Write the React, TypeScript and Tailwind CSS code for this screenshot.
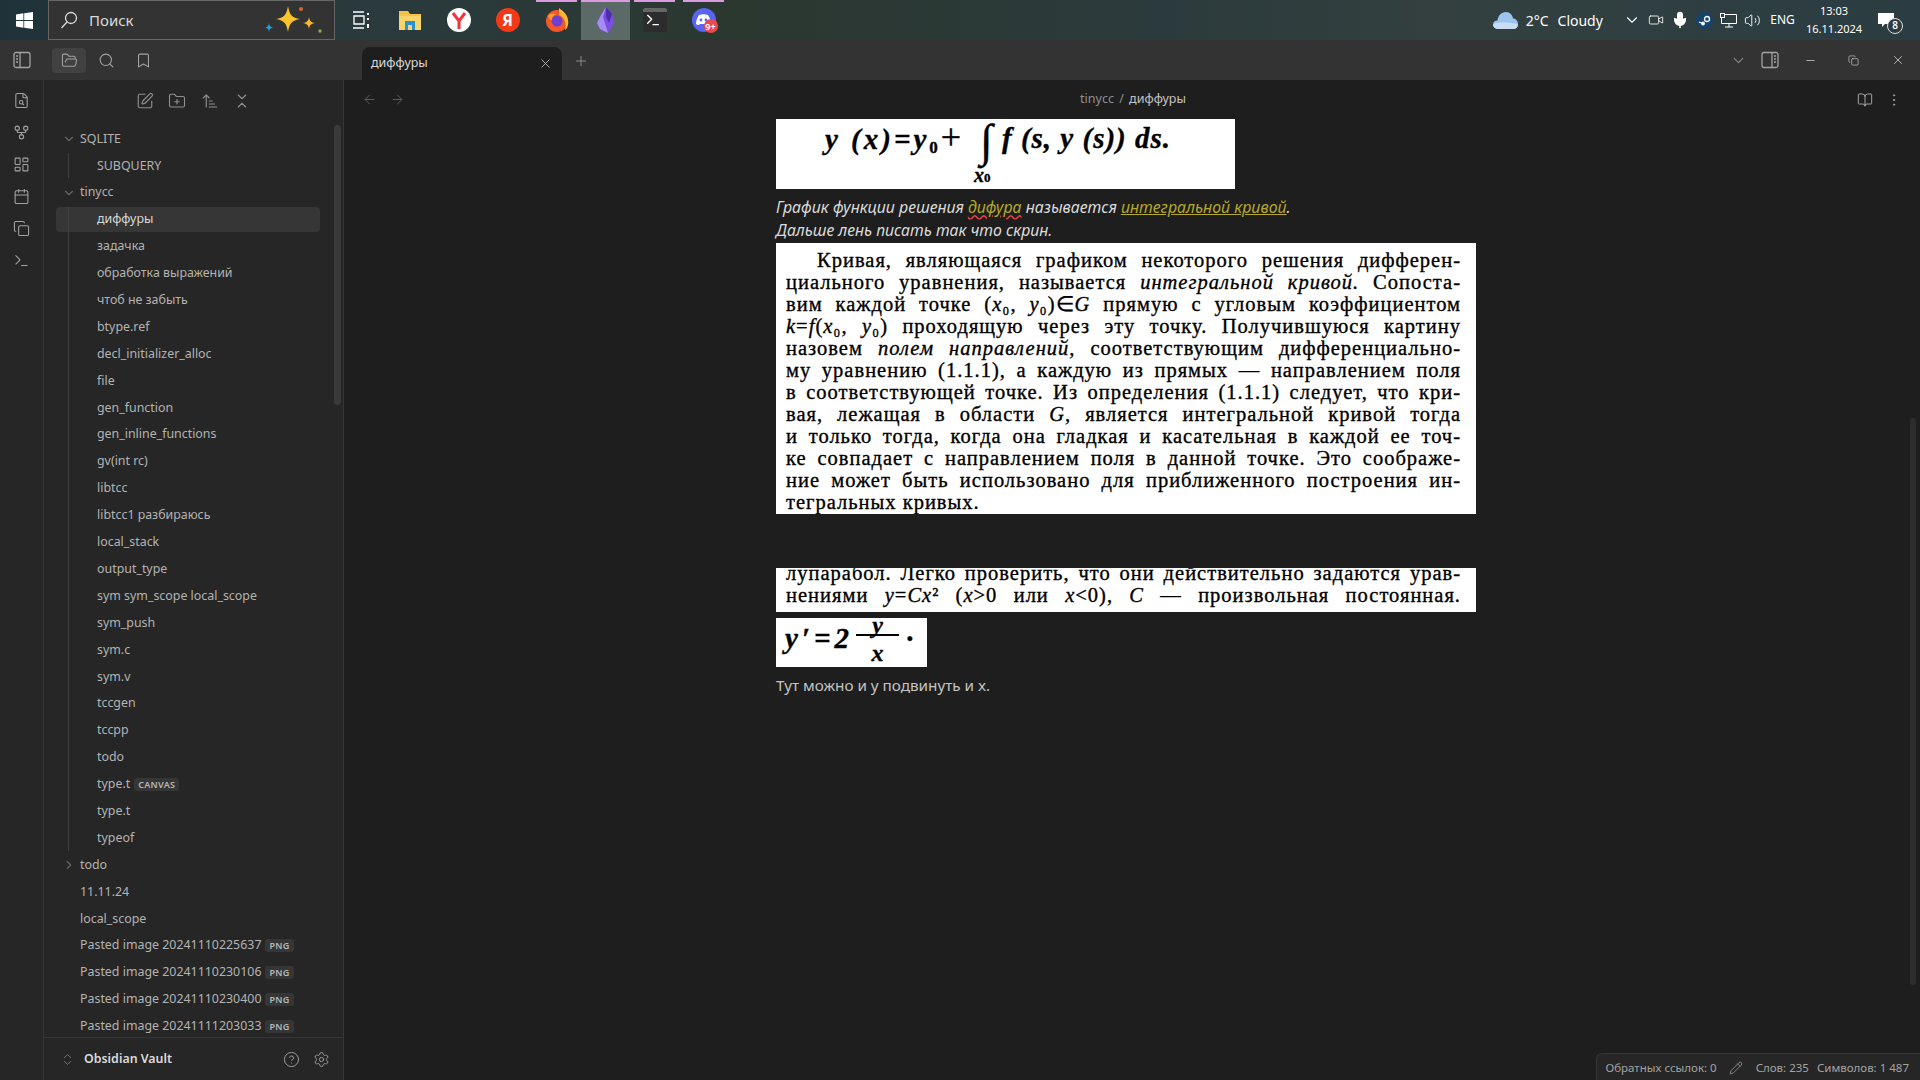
import React from 'react';
import {
  ArrowLeft,
  ArrowRight,
  ArrowUpNarrowWide,
  Bookmark,
  BookOpen,
  Calendar,
  ChevronDown,
  ChevronRight,
  ChevronsDownUp,
  ChevronsUpDown,
  CircleHelp,
  Copy,
  FileSearch,
  FolderOpen,
  FolderPlus,
  GitFork,
  LayoutDashboard,
  Mic,
  Minus,
  MoreVertical,
  Pencil,
  Plus,
  Search,
  Settings,
  SquarePen,
  Terminal,
  Video,
  Volume2,
  X,
} from 'lucide-react';

const serif = "font-['Liberation_Serif',serif] text-black [-webkit-text-stroke:0.35px_black]";

const tinyccFiles = [
  'задачка',
  'обработка выражений',
  'чтоб не забыть',
  'btype.ref',
  'decl_initializer_alloc',
  'file',
  'gen_function',
  'gen_inline_functions',
  'gv(int rc)',
  'libtcc',
  'libtcc1 разбираюсь',
  'local_stack',
  'output_type',
  'sym sym_scope local_scope',
  'sym_push',
  'sym.c',
  'sym.v',
  'tccgen',
  'tccpp',
  'todo',
];

const pasted = ['20241110225637', '20241110230106', '20241110230400', '20241111203033'];

const Badge = ({ label }: { label: string }) => (
  <span className="ml-[4px] rounded-[3px] bg-[#363636] px-[4px] text-[9px] leading-[13px] font-semibold tracking-[0.3px] text-[#b8b8b8]">
    {label}
  </span>
);

const Row = ({ label, child, badge, active }: { label: string; child?: boolean; badge?: string; active?: boolean }) => (
  <div
    className={`mx-[12px] flex h-[25px] w-[264px] shrink-0 items-center rounded-[4px] text-[12.4px] ${
      child ? 'pl-[41px]' : 'pl-[24px]'
    } ${active ? 'bg-[#363636] text-[#dadada]' : 'text-[#b3b3b3]'}`}
  >
    <span className="whitespace-nowrap">{label}</span>
    {badge && <Badge label={badge} />}
  </div>
);

const Folder = ({ label, open }: { label: string; open?: boolean }) => (
  <div className="relative mx-[12px] flex h-[25px] w-[264px] shrink-0 items-center pl-[24px] text-[12.4px] text-[#b3b3b3]">
    <span className="absolute left-[6px] text-[#666]">
      {open ? <ChevronDown size={14} strokeWidth={2} /> : <ChevronRight size={14} strokeWidth={2} />}
    </span>
    {label}
  </div>
);

const PaneIcon = ({ right }: { right?: boolean }) => (
  <svg width="18" height="18" viewBox="0 0 18 18" fill="none" stroke="currentColor" strokeWidth="1.300" className={right ? '-scale-x-100' : ''}>
    <rect x="1" y="1.500" width="16" height="15" rx="2" />
    <path d="M7 1.500v15M3 5h2M3 8h2M3 11h2" />
  </svg>
);

const WindowsLogo = () => (
  <svg width="17" height="17" viewBox="0 0 17 17" fill="#fff">
    <path d="M0 2.400 7.400 1.300V8H0zM8.200 1.200 17 0v8H8.200zM0 9h7.400v6.700L0 14.600zM8.200 9H17v8l-8.800-1.200z" />
  </svg>
);

const Sparkle = () => (
  <svg width="64" height="36" viewBox="0 0 64 36">
    <path d="M26 4c1.500 9 4 12 12 13-8 1.500-10.500 4-12 13-1.500-9-4-11.500-12-13 8-1 10.500-4 12-13z" fill="#fcc32c" />
    <path d="M47 15c.7 4 2 5.500 6 6-4 .7-5.300 2-6 6-.7-4-2-5.300-6-6 4-.5 5.300-2 6-6z" fill="#f7b92a" />
    <path d="M7 21c.4 3 1.500 4 4 4.500-2.500.5-3.600 1.500-4 4.500-.4-3-1.500-4-4-4.500 2.500-.5 3.600-1.500 4-4.500z" fill="#1ea4e0" />
    <circle cx="39" cy="7" r="2" fill="#d9662a" />
    <circle cx="58" cy="29" r="1.700" fill="#7fb53a" />
  </svg>
);

const Slot = ({ children, active, line = true }: { children: React.ReactNode; active?: boolean; line?: boolean }) => (
  <div className={`relative flex h-10 w-[49px] items-center justify-center ${active ? 'bg-[#5b6a67]' : ''}`}>
    {line && <span className={`absolute top-0 h-[2px] bg-[#dc9be0] ${active ? 'inset-x-0' : 'inset-x-1'}`} />}
    {children}
  </div>
);

const TaskbarIcons = () => (
  <div className="flex">
    <Slot line={false}>
      <svg width="20" height="20" viewBox="0 0 20 20" fill="none" stroke="#fff" strokeWidth="1.300">
        <path d="M2 2h11M2 18h11M3 6h10v8H3z" />
        <rect x="16" y="3" width="2" height="2" fill="#fff" stroke="none" />
        <rect x="16" y="8" width="2" height="2" fill="#fff" stroke="none" />
        <rect x="16" y="14" width="2" height="4" fill="#fff" stroke="none" />
      </svg>
    </Slot>
    <Slot line={false}>
      <svg width="24" height="24" viewBox="0 0 24 24">
        <path d="M1 3h9l2 3h11v16H1z" fill="#f3c343" />
        <rect x="1" y="8" width="22" height="14" fill="#f8d568" />
        <rect x="7" y="13" width="10" height="9" fill="#2a8fd4" />
        <rect x="10" y="17" width="4" height="5" fill="#f8d568" />
      </svg>
    </Slot>
    <Slot line={false}>
      <svg width="24" height="24" viewBox="0 0 24 24">
        <circle cx="12" cy="12" r="12" fill="#fff" />
        <path d="M6 5l6 8 6-8M12 13v8" fill="none" stroke="#f5333f" strokeWidth="3" />
      </svg>
    </Slot>
    <Slot line={false}>
      <span className="flex h-6 w-6 items-center justify-center rounded-full bg-[#f33a16] text-[16px] font-bold text-white">Я</span>
    </Slot>
    <Slot>
      <svg width="24" height="24" viewBox="0 0 24 24">
        <circle cx="12" cy="13" r="11" fill="#f5572a" />
        <path d="M14 0c4 3 8 6 9 12 1 5-1 9-3 10 2-7-1-13-6-15z" fill="#ffb52c" />
        <circle cx="12" cy="13" r="5.500" fill="#6f3fd0" />
        <path d="M3 8c3-3 6-3 8-1-3 0-4 2-4 5-2 0-3-2-4-4z" fill="#ff9b2b" />
      </svg>
    </Slot>
    <Slot active>
      <svg width="20" height="26" viewBox="0 0 20 26">
        <path d="M10 0 16 7l2 10-6 9-8-4-3-6 4-8z" fill="#7c4fe0" />
        <path d="M10 0 7 10l5 16-8-4-3-6 4-8z" fill="#a88bfa" />
        <path d="M10 0 16 7l-3 9-3-6z" fill="#4c2bb0" />
      </svg>
    </Slot>
    <Slot>
      <span className="flex h-6 w-6 flex-col overflow-hidden rounded-[2px] bg-[#2c2c2c]">
        <span className="h-[4px] bg-[#666]" />
        <Terminal size={16} strokeWidth={2} className="ml-[2px] text-white" />
      </span>
    </Slot>
    <Slot>
      <span className="relative flex h-6 w-6 items-center justify-center rounded-full bg-[#5865f2]">
        <svg width="15" height="12" viewBox="0 0 15 12" fill="#fff">
          <path d="M3 1c3-1 6-1 9 0 2 3 3 6 3 9-1 1-2 1-3 1l-1-1H4l-1 1c-1 0-2 0-3-1 0-3 1-6 3-9z" />
          <circle cx="5" cy="6" r="1.400" fill="#5865f2" />
          <circle cx="10" cy="6" r="1.400" fill="#5865f2" />
        </svg>
        <span className="absolute -right-[2px] -bottom-[1px] flex h-[14px] w-[14px] items-center justify-center rounded-full bg-[#ea4a4f] text-[9px] leading-none font-semibold text-white">
          9+
        </span>
      </span>
    </Slot>
  </div>
);

const TraySlot = ({ children }: { children: React.ReactNode }) => (
  <div className="flex w-[24.2px] items-center justify-center">{children}</div>
);

const Tray = () => (
  <div className="ml-auto flex h-10 items-center pr-[16px] text-white">
    <svg width="25" height="17" viewBox="0 0 25 17">
      <path d="M6 17C2 17 0 15 0 12.500 0 10 2 8.500 4.500 8.500 5 4 8 0 13 0c4 0 6.500 3 7 6.500 3 0 5 2.500 5 5.500 0 3-2 5-5 5z" fill="#9cc4ee" />
      <path d="M6 17C2 17 0 15 0 12.500 4 10 12 10 25 12c0 3-2 5-5 5z" fill="#c9dcf2" />
    </svg>
    <span className="ml-[8px] text-[14px]">2°C</span>
    <span className="mr-[17px] ml-[9px] text-[14px]">Cloudy</span>
    <TraySlot><ChevronDown size={18} strokeWidth={1.500} /></TraySlot>
    <TraySlot><Video size={16} strokeWidth={1.300} /></TraySlot>
    <TraySlot><Mic size={18} strokeWidth={2} fill="#fff" /></TraySlot>
    <TraySlot>
      <span className="flex h-[17px] w-[17px] items-center justify-center rounded-full bg-[#16426e]">
        <svg width="13" height="11" viewBox="0 0 13 11" fill="none" stroke="#fff" strokeWidth="1.300">
          <circle cx="9" cy="4" r="2.500" />
          <path d="M1 7l5 2" />
          <circle cx="5" cy="8.500" r="1.300" />
        </svg>
      </span>
    </TraySlot>
    <TraySlot>
      <svg width="17" height="15" viewBox="0 0 17 15" fill="none" stroke="#fff">
        <path d="M4 1.500h12.500v9H1.500V5M9 10.500V14M5 14h8" />
        <rect x="0.500" y="0.500" width="4" height="4" />
      </svg>
    </TraySlot>
    <TraySlot><Volume2 size={17} strokeWidth={1.300} /></TraySlot>
    <div className="w-[35px] text-center text-[12px]">ENG</div>
    <div className="w-[68px] text-center text-[11px] leading-[18px]">
      <div>13:03</div>
      <div>16.11.2024</div>
    </div>
    <div className="relative flex w-[36px] justify-center">
      <svg width="16" height="15" viewBox="0 0 16 15">
        <path d="M0 0h16v11H7l-3 3v-3H0z" fill="#fff" />
      </svg>
      <span className="absolute top-[5px] left-[19px] flex h-[16px] w-[16px] items-center justify-center rounded-full border border-[#ddd] bg-[#2c3c40] text-[10px] font-semibold">
        8
      </span>
    </div>
  </div>
);

const TitleBar = () => (
  <div className="flex h-10 items-center bg-[#333333] text-[#a3a3a3]">
    <div className="flex w-[44px] justify-center">
      <PaneIcon />
    </div>
    <div className="ml-[8px] flex h-[25px] w-[34px] items-center justify-center rounded-[4px] bg-[#414141]">
      <FolderOpen size={17} strokeWidth={1.500} />
    </div>
    <div className="ml-[3px] flex w-[34px] justify-center">
      <Search size={17} strokeWidth={1.500} />
    </div>
    <div className="ml-[3px] flex w-[34px] justify-center">
      <Bookmark size={17} strokeWidth={1.500} />
    </div>
    <div className="ml-[202px] flex h-[33px] w-[200px] items-center justify-between self-end rounded-t-[8px] bg-[#1e1e1e] px-[9px] text-[12.5px] text-[#dadada]">
      диффуры
      <X size={15} strokeWidth={1.500} className="text-[#b3b3b3]" />
    </div>
    <Plus size={16} strokeWidth={1.500} className="mt-[2px] ml-[11px] text-[#8a8a8a]" />
    <div className="ml-auto flex items-center">
      <ChevronDown size={17} strokeWidth={1.500} className="mr-[14px] text-[#8a8a8a]" />
      <PaneIcon right />
      <Minus size={13} strokeWidth={1.300} className="mr-[31px] ml-[25px] text-[#dadada]" />
      <Copy size={11} strokeWidth={1.300} className="mr-[32px] text-[#dadada]" />
      <X size={14} strokeWidth={1.300} className="mr-[15px] text-[#dadada]" />
    </div>
  </div>
);

const Rail = () => (
  <div className="flex w-[44px] shrink-0 flex-col items-center gap-[15px] border-r border-[#363636] bg-[#262626] pt-[12px] text-[#a3a3a3]">
    <FileSearch size={17} strokeWidth={1.500} />
    <GitFork size={17} strokeWidth={1.500} />
    <LayoutDashboard size={17} strokeWidth={1.500} />
    <Calendar size={17} strokeWidth={1.500} />
    <Copy size={17} strokeWidth={1.500} />
    <Terminal size={17} strokeWidth={1.500} />
  </div>
);

const Sidebar = () => (
  <div className="relative flex w-[300px] shrink-0 flex-col border-r border-[#363636] bg-[#262626] font-['Noto_Sans',sans-serif]">
    <div className="flex h-[46.5px] shrink-0 items-start justify-center gap-[14.500px] pt-[12px] text-[#8f8f8f]">
      <SquarePen size={18} strokeWidth={1.500} />
      <FolderPlus size={18} strokeWidth={1.500} />
      <ArrowUpNarrowWide size={18} strokeWidth={1.500} />
      <ChevronsDownUp size={18} strokeWidth={1.500} />
    </div>
    <div className="flex flex-1 flex-col gap-[1.900px] overflow-hidden">
      <Folder label="SQLITE" open />
      <div className="relative flex flex-col">
        <span className="absolute top-0 bottom-0 left-[24px] z-10 w-px bg-[#3f3f3f]" />
        <Row label="SUBQUERY" child />
      </div>
      <Folder label="tinycc" open />
      <div className="relative flex flex-col gap-[1.900px]">
        <span className="absolute top-0 bottom-0 left-[24px] z-10 w-px bg-[#3f3f3f]" />
        <Row label="диффуры" child active />
        {tinyccFiles.map((name) => (
          <Row key={name} label={name} child />
        ))}
        <Row label="type.t" child badge="CANVAS" />
        <Row label="type.t" child />
        <Row label="typeof" child />
      </div>
      <Folder label="todo" />
      <Row label="11.11.24" />
      <Row label="local_scope" />
      {pasted.map((stamp) => (
        <Row key={stamp} label={`Pasted image ${stamp}`} badge="PNG" />
      ))}
    </div>
    <div className="flex h-[43px] shrink-0 items-center border-t border-[#363636] pr-[13px] pl-[16px] text-[#a3a3a3]">
      <ChevronsUpDown size={15} strokeWidth={1.500} className="text-[#777]" />
      <span className="ml-[9px] text-[12.4px] font-semibold text-[#dadada]">Obsidian Vault</span>
      <CircleHelp size={17} strokeWidth={1.300} className="ml-auto" />
      <Settings size={17} strokeWidth={1.300} className="ml-[13px]" />
    </div>
    <span className="absolute top-[45px] right-[2px] h-[280px] w-[7px] rounded-[4px] bg-[#3a3a3a]" />
  </div>
);

const ScanLine = ({ children, first, last }: { children: React.ReactNode; first?: boolean; last?: boolean }) => (
  <div
    className={`h-[22px] whitespace-nowrap text-[20.5px] leading-[22px] tracking-[1px] ${first ? 'pl-[31px]' : ''} ${
      last ? '' : '[text-align-last:justify]'
    }`}
  >
    {children}
  </div>
);

const Scan = () => (
  <div className={`h-[271px] w-[700px] overflow-hidden bg-white pt-[6px] pr-[15px] pl-[10px] ${serif}`}>
    <ScanLine first>Кривая, являющаяся графиком некоторого решения дифферен-</ScanLine>
    <ScanLine>
      циального уравнения, называется <i>интегральной кривой.</i> Сопоста-
    </ScanLine>
    <ScanLine>
      вим каждой точке (<i>x</i>₀, <i>y</i>₀)∈<i>G</i> прямую с угловым коэффициентом
    </ScanLine>
    <ScanLine>
      <i>k</i>=<i>f</i>(<i>x</i>₀, <i>y</i>₀) проходящую через эту точку. Получившуюся картину
    </ScanLine>
    <ScanLine>
      назовем <i>полем направлений,</i> соответствующим дифференциально-
    </ScanLine>
    <ScanLine>му уравнению (1.1.1), а каждую из прямых — направлением поля</ScanLine>
    <ScanLine>в соответствующей точке. Из определения (1.1.1) следует, что кри-</ScanLine>
    <ScanLine>
      вая, лежащая в области <i>G,</i> является интегральной кривой тогда
    </ScanLine>
    <ScanLine>и только тогда, когда она гладкая и касательная в каждой ее точ-</ScanLine>
    <ScanLine>ке совпадает с направлением поля в данной точке. Это соображе-</ScanLine>
    <ScanLine>ние может быть использовано для приближенного построения ин-</ScanLine>
    <ScanLine last>тегральных кривых.</ScanLine>
  </div>
);

const Formula = () => (
  <div className={`relative flex h-[70px] w-[459px] items-start bg-white pl-[49px] text-[29px] leading-[38px] font-bold italic ${serif}`}>
    <span className="w-[155px] whitespace-nowrap tracking-[3px]">
      y (x)=y<sub className="text-[17px] not-italic">0</sub>
      <span className="text-[36px] leading-none font-normal not-italic">+</span>
    </span>
    <span className="w-[22px] text-[46px] leading-[44px] font-normal">∫</span>
    <span className="whitespace-nowrap tracking-[1px]">f (s, y (s)) ds.</span>
    <span className="absolute top-[45px] left-[198px] text-[20px] leading-[22px]">
      x<span className="text-[13px] not-italic">0</span>
    </span>
  </div>
);

const Note = () => (
  <div className="relative min-w-0 flex-1 overflow-hidden bg-[#1e1e1e] font-['Noto_Sans',sans-serif]">
    <div className="flex h-[39px] items-center px-[18px] text-[#5f5f5f]">
      <ArrowLeft size={15} strokeWidth={1.500} className="mr-[13px]" />
      <ArrowRight size={15} strokeWidth={1.500} />
      <div className="flex-1 pl-[4px] text-center text-[12.5px] text-[#8f8f8f]">
        tinycc <span className="px-[2px]">/</span> <span className="text-[#c4c4c4]">диффуры</span>
      </div>
      <BookOpen size={16} strokeWidth={1.500} className="mr-[13px] text-[#a3a3a3]" />
      <MoreVertical size={16} strokeWidth={1.500} className="text-[#a3a3a3]" />
    </div>
    <div className="mr-[12px] flex justify-center">
      <div className="w-[700px]">
        <Formula />
        <p className="mt-[6px] text-[15.9px] leading-[24px] text-[#dadada] italic">
          График функции решения{' '}
          <span className="text-[#b5a72a] underline decoration-[#e04040] decoration-wavy">дифура</span> называется{' '}
          <span className="text-[#b5a72a] underline">интегральной кривой</span>.
        </p>
        <p className="h-[24px] text-[15.8px] leading-[22px] text-[#dadada] italic">Дальше лень писать так что скрин.</p>
        <Scan />
        <div className={`mt-[54px] h-[44px] w-[700px] overflow-hidden bg-white pr-[15px] pl-[10px] ${serif}`}>
          <div className="-mt-[6px]">
            <ScanLine>лупарабол. Легко проверить, что они действительно задаются урав-</ScanLine>
            <ScanLine>
              нениями <i>y</i>=<i>Cx</i>² (<i>x</i>&gt;0 или <i>x</i>&lt;0), <i>C</i> — произвольная постоянная.
            </ScanLine>
          </div>
        </div>
        <div className={`mt-[6px] flex h-[49px] w-[151px] items-start overflow-hidden bg-white pl-[9px] text-[29px] leading-[40px] font-bold tracking-[4px] italic ${serif}`}>
          y′=2
          <span className="ml-[3px] flex w-[43px] flex-col items-center text-[24px] leading-[20px] tracking-normal">
            <span className="h-[18px] w-full border-b-2 border-black text-center leading-[14px]">y</span>
            <span className="mt-[7px]">x</span>
          </span>
          <span className="ml-[6px] not-italic">·</span>
        </div>
        <p className="mt-[6px] text-[15.25px] leading-[24px] text-[#c4c4c4]">Тут можно и y подвинуть и x.</p>
      </div>
    </div>
    <span className="absolute top-[338px] right-[4px] h-[567px] w-[6px] rounded-[3px] bg-[#2c2c2c]" />
    <div className="absolute right-0 bottom-0 flex h-[27px] items-center rounded-tl-[6px] border-t border-l border-[#363636] bg-[#262626] pt-[1px] pr-[11px] pl-[8px] text-[11.5px] text-[#a3a3a3]">
      Обратных ссылок: 0
      <Pencil size={14} strokeWidth={1.300} className="mr-[12.5px] ml-[12.5px]" />
      Слов: 235
      <span className="ml-[8px]">Символов: 1 487</span>
    </div>
  </div>
);

const App = () => {
  return (
    <div className="flex h-screen w-screen flex-col overflow-hidden bg-[#1e1e1e] font-['Noto_Sans',sans-serif]">
      <div className="flex h-10 shrink-0 bg-[linear-gradient(90deg,#1f3239_0%,#2a3a3d_20%,#2b3830_38%,#2b3a3c_60%,#33403f_75%,#2b3d42_100%)]">
        <div className="flex w-[48px] items-center justify-center">
          <WindowsLogo />
        </div>
        <div className="flex h-10 w-[287px] items-center border border-[#666] bg-[#333333] pl-[11px] text-[#dadada]">
          <svg width="18" height="18" viewBox="0 0 18 18" fill="none" stroke="currentColor" strokeWidth="1.300">
            <circle cx="11" cy="7" r="5.500" />
            <path d="M7 11l-5.500 6" />
          </svg>
          <span className="ml-[11px] text-[15px]">Поиск</span>
          <span className="mr-[8px] ml-auto">
            <Sparkle />
          </span>
        </div>
        <div className="ml-px">
          <TaskbarIcons />
        </div>
        <Tray />
      </div>
      <TitleBar />
      <div className="flex min-h-0 flex-1">
        <Rail />
        <Sidebar />
        <Note />
      </div>
    </div>
  );
};

export default App;
